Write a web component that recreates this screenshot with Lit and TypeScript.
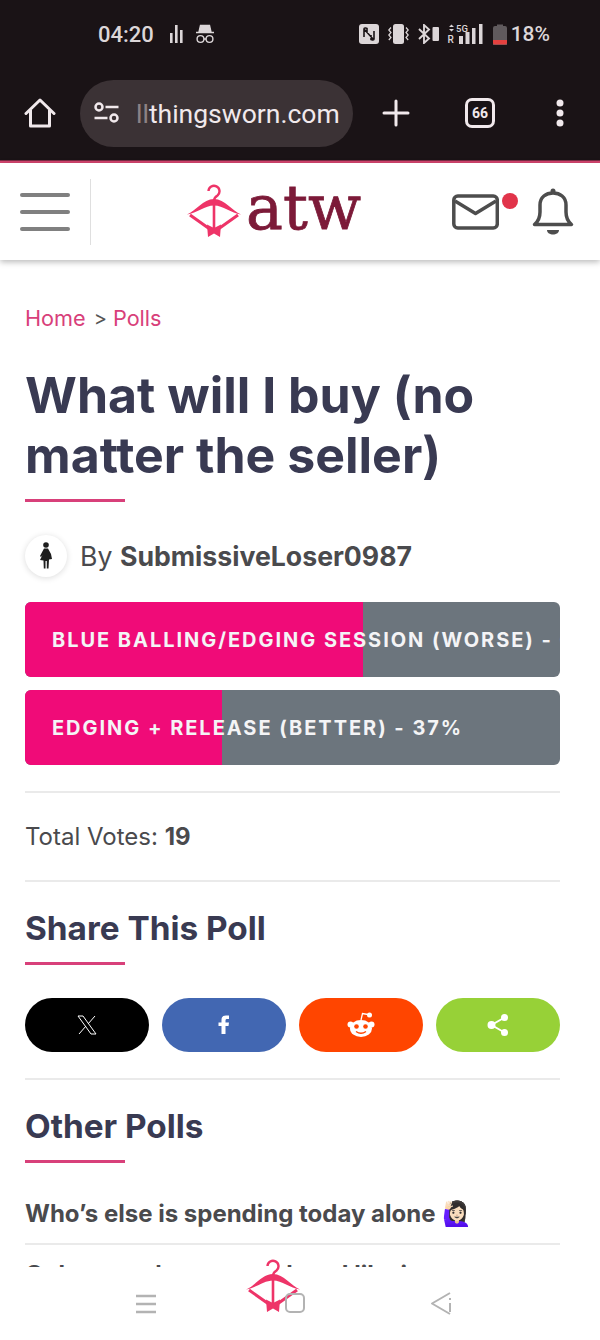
import { LitElement, html, css } from "lit";
import { customElement } from "lit/decorators.js";

const hanger = () => html`<svg class="hanger" width="54" height="54" viewBox="0 0 54 54" fill="none">
  <path d="M21.500 7 A5.500 5.500 0 1 1 30.500 11.500 C28 13 27 14 27 17" stroke="#ee3468" stroke-width="2.400"/>
  <path d="M0 30.500 C9 27 16 15 27 15 C38 15 45 27 54 30.500 C44 29 36 21.500 27 21.500 C18 21.500 10 29 0 30.500Z" fill="#ee3468"/>
  <path d="M3 31 L22 44.500 M51 31 L32 44.500" stroke="#ee3468" stroke-width="3"/>
  <path d="M27 18 L27 46" stroke="#ee3468" stroke-width="2.600"/>
  <path d="M20 40.500 L27 44 L34 40.500 L33 53 L27 49.500 L21 53Z" fill="#ee3468"/>
</svg>`;

@customElement("app-root")
export class AppRoot extends LitElement {
  static styles = css`
    :host { display: block; width: 600px; height: 1340px; overflow: hidden; position: relative; background: #fff; font-family: Inter, sans-serif; color: #4a4a4d; }
    svg { display: block; flex: none; }
    .chrome { background: #1a1316; height: 161px; border-bottom: 2px solid #d4456f; box-shadow: inset 0 -1px 0 #7a2a44; display: flex; flex-direction: column; color: #dcd6d8; }
    .status { height: 70px; display: flex; align-items: center; padding: 0 50px 2px 98px; font-family: Roboto, sans-serif; font-weight: 500; font-size: 22px; box-sizing: border-box; }
    .sicons { display: flex; align-items: center; gap: 11px; margin-left: 16px; }
    .right { margin-left: auto; display: flex; align-items: center; }
    .s-vib { margin-left: 9px; }
    .s-bt { margin-left: 9px; }
    .s-sig { margin-left: 8px; }
    .s-bat { margin-left: 8px; }
    .pct { font-size: 21px; margin-left: 4px; }
    .toolbar { flex: 1; display: flex; align-items: center; padding: 0 0 5px 24px; color: #f1e9ec; }
    .url { margin-left: 24px; width: 273px; height: 67px; border-radius: 34px; background: #3b3235; display: flex; align-items: center; padding-left: 14px; box-sizing: border-box; gap: 17px; font-family: Roboto, sans-serif; font-size: 26.500px; overflow: hidden; white-space: nowrap; }
    .fade { color: #8c8285; }
    .plus { margin-left: 29px; }
    .tabs { margin-left: 55px; width: 30px; height: 30px; box-sizing: border-box; border: 3px solid #f1e9ec; border-radius: 7px; font-family: Roboto, sans-serif; font-size: 14px; font-weight: 700; display: flex; align-items: center; justify-content: center; }
    .dots { margin-left: 61px; }
    .head { height: 97px; background: #fff; box-shadow: 0 2px 6px rgba(0,0,0,.28); display: flex; align-items: center; position: relative; }
    .burger { width: 91px; height: 66px; border-right: 1px solid #dfdfdf; box-sizing: border-box; display: flex; flex-direction: column; justify-content: center; gap: 13px; padding-left: 20px; }
    .burger i { display: block; width: 50px; height: 4px; border-radius: 2px; background: #808080; }
    .logo { display: flex; align-items: center; margin-left: 96px; gap: 5px; margin-top: -2px; }
    .logotext { font-family: "DejaVu Serif", serif; font-size: 62px; line-height: 56px; color: #7c1a38; margin-top: -6px; -webkit-text-stroke: .8px #7c1a38; }
    .mail { position: relative; margin-left: 91px; }
    .dot { position: absolute; width: 16px; height: 16px; border-radius: 50%; background: #e1344a; right: -19px; top: -1px; }
    .bell { margin-left: 33px; }
    main { padding: 0 40px 0 25px; }
    .crumb { margin: 44px 0 0; font-size: 21.670px; line-height: 28px; color: #d8407a; display: flex; align-items: center; gap: 8px; }
    .crumb span { color: #555; font-size: 20px; margin-right: -2px; }
    h1 { margin: 33px 0 0; font-size: 50px; line-height: 60px; font-weight: 700; color: #393a52; }
    .rule { width: 100px; height: 3px; background: #d8407a; }
    h1 + .rule { margin-top: 14px; }
    .by { display: flex; align-items: center; margin-top: 33px; font-size: 26.670px; line-height: 42px; gap: 13px; }
    .avatar { width: 42px; height: 42px; border-radius: 50%; background: #fff; box-shadow: 0 1px 6px rgba(0,0,0,.14); display: flex; align-items: center; justify-content: center; }
    .by b { font-weight: 700; }
    .polls { margin-top: 25px; display: flex; flex-direction: column; gap: 13px; }
    .bar { position: relative; height: 75px; border-radius: 6px; background: #6c757d; overflow: hidden; display: flex; align-items: center; }
    .fill { position: absolute; left: 0; top: 0; bottom: 0; background: #f00b78; }
    .bar span { position: relative; padding-left: 27px; color: #f4f4f6; font-weight: 700; font-size: 20px; letter-spacing: 1.960px; white-space: nowrap; }
    hr { border: 0; height: 2px; background: #eaeaea; margin: 0; }
    .polls + hr { margin-top: 26px; }
    .total { font-size: 24px; line-height: 28px; padding: 30px 0 29px; }
    h2 { margin: 27px 0 0; font-size: 33.330px; line-height: 38px; font-weight: 700; color: #393a52; }
    h2 + .rule { margin-top: 15px; }
    .share { margin-top: 33px; display: grid; grid-template-columns: repeat(4, 1fr); gap: 13px; }
    .share a { height: 54px; border-radius: 27px; display: flex; align-items: center; justify-content: center; }
    .sx { background: #000; }
    .sf { background: #4267b2; }
    .sr { background: #ff4500; }
    .ss { background: #97d137; }
    .share + hr { margin-top: 26px; }
    .row { font-size: 24px; line-height: 32px; font-weight: 700; display: flex; align-items: center; gap: 6px; white-space: nowrap; }
    .r1 { margin-top: 35px; padding-bottom: 13px; }
    .r2 { padding-top: 14px; }
    .nav { position: absolute; left: 0; right: 0; top: 1267px; bottom: 0; background: #fff; }
    .nav svg { position: absolute; }
    .nav .hanger { left: 246px; top: -8px; }
    .n1 { left: 135px; top: 27px; }
    .n2 { left: 285px; top: 26px; }
    .n3 { left: 430px; top: 25px; }
  `;

  render() {
    return html`
      <div class="chrome">
        <div class="status">
          <span>04:20</span>
          <div class="sicons">
            <svg width="14" height="20" viewBox="0 0 14 20" fill="#dcd6d8"><rect x="0" y="9" width="2.600" height="10"/><rect x="5" y="1" width="2.600" height="18"/><rect x="10" y="6" width="2.600" height="13"/></svg>
            <svg width="20" height="20" viewBox="0 0 20 20" fill="none" stroke="#dcd6d8" stroke-width="1.400"><path d="M4 8 L5.500 1.500 H14.500 L16 8Z M1 8.500 H19" fill="#dcd6d8"/><circle cx="5.500" cy="15" r="3.400"/><circle cx="14.500" cy="15" r="3.400"/><path d="M9 15 H11"/></svg>
          </div>
          <div class="right">
            <svg width="20" height="20" viewBox="0 0 20 20" fill="none"><rect width="20" height="20" rx="3" fill="#dcd6d8"/><path d="M7 4 H6 Q5 4 5 5 V13 M5 5 L14 15 M15 7 V15 Q15 16 14 16 H13 M7 4 L8 4.500 V9 M13 16 L12 15.500 V11" stroke="#1a1316" stroke-width="1.600"/></svg>
            <svg class="s-vib" width="21" height="20" viewBox="0 0 21 20" fill="none" stroke="#dcd6d8" stroke-width="1.200"><rect x="5" y="0" width="11" height="20" rx="2.500" fill="#dcd6d8" stroke="none"/><path d="M3 3.500 L.800 6 L3 8.500 L.800 11 L3 13.500 L.800 16 M18 3.500 L20.200 6 L18 8.500 L20.200 11 L18 13.500 L20.200 16"/></svg>
            <svg class="s-bt" width="21" height="20" viewBox="0 0 21 20" fill="none" stroke="#dcd6d8" stroke-width="1.900"><path d="M1 5 L11 14.500 L6 19 V1 L11 5.500 L1 15"/><rect x="14.500" y="3" width="6.500" height="14" rx="1" fill="#dcd6d8" stroke="none"/></svg>
            <svg class="s-sig" width="38" height="22" viewBox="0 0 38 22" fill="#dcd6d8"><path d="M2 4 L4.500 1.500 L7 4Z M2 6 L4.500 8.500 L7 6Z"/><text x="0.500" y="20" font-size="10" font-family="Roboto">R</text><text x="9" y="9" font-size="9.500" font-family="Roboto" font-weight="500">5G</text><rect x="12" y="13" width="4" height="8"/><rect x="18.500" y="9" width="4" height="12"/><rect x="25" y="5" width="3.500" height="16"/><rect x="32" y="1" width="3.500" height="20"/></svg>
            <svg class="s-bat" width="14" height="22" viewBox="0 0 14 22"><path d="M4 1.500 H10 V3 H12 Q14 3 14 5 V22 H0 V5 Q0 3 2 3 H4Z" fill="#605a5d"/><path d="M0 17 H14 V20 Q14 21.500 12 21.500 H2 Q0 21.500 0 20Z" fill="#e5413f"/></svg>
            <span class="pct">18%</span>
          </div>
        </div>
        <div class="toolbar">
          <svg width="32" height="32" viewBox="0 0 32 32" fill="none" stroke="#f1e9ec" stroke-width="3" stroke-linejoin="round" stroke-linecap="round"><path d="M2 16.500 L16 3 L30 16.500 M6.500 13 V29 H25.500 V13"/></svg>
          <div class="url">
            <svg width="25" height="22" viewBox="0 0 25 22" fill="none" stroke="#f1e9ec" stroke-width="2.500"><circle cx="5" cy="5" r="3.500"/><path d="M11.500 5 H24.500 M.500 16 H13.500"/><circle cx="20" cy="16" r="3.500"/></svg>
            <span><span class="fade">ll</span>thingsworn.com</span>
          </div>
          <svg class="plus" width="28" height="28" viewBox="0 0 28 28" stroke="#f1e9ec" stroke-width="3" stroke-linecap="round"><path d="M14 2 V26 M2 14 H26"/></svg>
          <div class="tabs">66</div>
          <svg class="dots" width="8" height="28" viewBox="0 0 8 28" fill="#f1e9ec"><circle cx="4" cy="4" r="3.500"/><circle cx="4" cy="14" r="3.500"/><circle cx="4" cy="24" r="3.500"/></svg>
        </div>
      </div>
      <header class="head">
        <div class="burger"><i></i><i></i><i></i></div>
        <div class="logo">
          ${hanger()}
          <span class="logotext">atw</span>
        </div>
        <div class="mail">
          <svg width="47" height="36" viewBox="0 0 47 36" fill="none" stroke="#4d4d4d" stroke-width="3.500" stroke-linejoin="round"><rect x="1.800" y="2" width="43.500" height="32" rx="4"/><path d="M3 7 L23.500 19.500 L44 7"/></svg>
          <span class="dot"></span>
        </div>
        <svg class="bell" width="42" height="48" viewBox="0 0 42 48" fill="none" stroke="#4d4d4d" stroke-width="3.500" stroke-linejoin="round"><path d="M2.500 36.500 Q8 32 8 24 V17 C8 9 14 5 21 5 C28 5 34 9 34 17 V24 Q34 32 39.500 36.500Z"/><circle cx="21" cy="3" r="2.500" fill="#4d4d4d" stroke="none"/><path d="M15 42 H27 C27 48 15 48 15 42Z" fill="#4d4d4d" stroke="none"/></svg>
      </header>
      <main>
        <div class="crumb">Home <span>&gt;</span> Polls</div>
        <h1>What will I buy (no matter the seller)</h1>
        <div class="rule"></div>
        <div class="by">
          <div class="avatar">
            <svg width="14" height="28" viewBox="0 0 14 28" fill="#1e1e1e"><circle cx="7" cy="3" r="2.800"/><path d="M5 6.500 H9 L12 12 L13 17 L10 17.500 L9.500 26.500 H7.800 V19 H6.500 V26.500 H4.800 L4.500 18.500 L1 18 L3.500 13 L2 15 L1 14Z"/></svg>
          </div>
          <span>By <b>SubmissiveLoser0987</b></span>
        </div>
        <div class="polls">
          <div class="bar"><div class="fill" style="width:63.200%"></div><span>BLUE BALLING/EDGING SESSION (WORSE) - 63%</span></div>
          <div class="bar"><div class="fill" style="width:36.900%"></div><span>EDGING + RELEASE (BETTER) - 37%</span></div>
        </div>
        <hr />
        <div class="total">Total Votes: <b>19</b></div>
        <hr />
        <h2>Share This Poll</h2>
        <div class="rule"></div>
        <div class="share">
          <a class="sx"><svg width="20" height="20" viewBox="0 0 20 20" fill="none" stroke="#fff" stroke-width="1"><path d="M1 1 H6 L19 19 H14Z M18 1 L11 9 M2 19 L9 11"/></svg></a>
          <a class="sf"><svg width="12" height="20" viewBox="0 0 12 20" fill="#fff"><path d="M3.500 19 V11 H.500 V7.500 H3.500 V5 C3.500 2 5 .500 8 .500 H11 V4 H9 C8 4 7.500 4.500 7.500 5.500 V7.500 H11 L10.500 11 H7.500 V19Z"/></svg></a>
          <a class="sr"><svg width="28" height="26" viewBox="0 0 28 26" fill="#fff"><ellipse cx="14" cy="16.500" rx="11" ry="8.500"/><circle cx="3.500" cy="12.500" r="3"/><circle cx="24.500" cy="12.500" r="3"/><path d="M14 8 L15.500 1.500 L21 2.500" fill="none" stroke="#fff" stroke-width="1.300"/><circle cx="22.500" cy="3" r="2.500"/><circle cx="9.500" cy="14.500" r="2.300" fill="#ff4500"/><circle cx="18.500" cy="14.500" r="2.300" fill="#ff4500"/><path d="M9 19.500 Q14 23 19 19.500" fill="none" stroke="#ff4500" stroke-width="1.400"/></svg></a>
          <a class="ss"><svg width="22" height="24" viewBox="0 0 22 24" fill="#fff" stroke="#fff" stroke-width="2"><path d="M4.500 12 L17.500 4.500 M4.500 12 L17.500 19.500"/><circle cx="4.500" cy="12" r="3"/><circle cx="17.500" cy="4.500" r="2.500"/><circle cx="17.500" cy="19.500" r="2.500"/></svg></a>
        </div>
        <hr />
        <h2>Other Polls</h2>
        <div class="rule"></div>
        <div class="row r1">Who’s else is spending today alone <span>🙋🏻‍♀️</span></div>
        <hr />
        <div class="row r2">Only some hours care how I like it</div>
      </main>
      <nav class="nav">
        ${hanger()}
        <svg class="n1" width="22" height="20" viewBox="0 0 22 20" stroke="#b3b3b3" stroke-width="2.500"><path d="M1 2 H21 M1 10 H21 M1 18 H21"/></svg>
        <svg class="n2" width="20" height="20" viewBox="0 0 20 20" fill="none" stroke="#b3b3b3" stroke-width="2"><rect x="1" y="1" width="18" height="18" rx="4"/></svg>
        <svg class="n3" width="24" height="24" viewBox="0 0 24 24" fill="none" stroke="#b3b3b3" stroke-width="2" stroke-linejoin="round"><path d="M20 1 L2 11.500 L20 22 M20 6 V8 M20 11 V20"/></svg>
      </nav>
    `;
  }
}
